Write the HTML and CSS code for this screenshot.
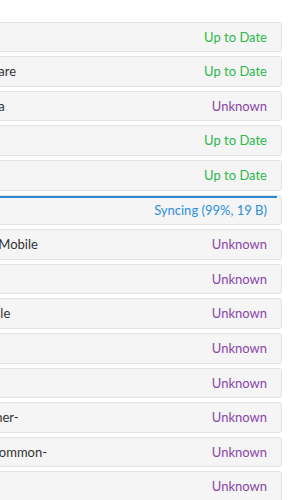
FILE: index.html
```html
<!DOCTYPE html>
<html lang="en">

<head>
    <meta charset="UTF-8">
    <meta name="viewport" content="width=device-width, initial-scale=1.0">
    <title>Folders</title>
    <link rel="stylesheet" href="styles.css">
</head>

<body>

    <div class="folders">
        <div class="folder">
            <span class="folder-name">Photos</span>
            <span class="status status-ok">Up to Date</span>
        </div>
        <div class="folder">
            <span class="folder-name">Gaming Software</span>
            <span class="status status-ok">Up to Date</span>
        </div>
        <div class="folder">
            <span class="folder-name">Mobile Camera</span>
            <span class="status status-unknown">Unknown</span>
        </div>
        <div class="folder">
            <span class="folder-name">Music</span>
            <span class="status status-ok">Up to Date</span>
        </div>
        <div class="folder">
            <span class="folder-name">Books</span>
            <span class="status status-ok">Up to Date</span>
        </div>
        <div class="folder folder-syncing">
            <div class="progress" style="width: 99%"></div>
            <span class="folder-name">Notes</span>
            <span class="status status-syncing">Syncing (99%, 19 B)</span>
        </div>
        <div class="folder">
            <span class="folder-name">Voice Memos Mobile</span>
            <span class="status status-unknown">Unknown</span>
        </div>
        <div class="folder">
            <span class="folder-name">Work</span>
            <span class="status status-unknown">Unknown</span>
        </div>
        <div class="folder">
            <span class="folder-name">Musique Mobile</span>
            <span class="status status-unknown">Unknown</span>
        </div>
        <div class="folder">
            <span class="folder-name">Backup</span>
            <span class="status status-unknown">Unknown</span>
        </div>
        <div class="folder">
            <span class="folder-name">Shared</span>
            <span class="status status-unknown">Unknown</span>
        </div>
        <div class="folder">
            <span class="folder-name">Widget-Weather-</span>
            <span class="status status-unknown">Unknown</span>
        </div>
        <div class="folder">
            <span class="folder-name">Android-Lib-Common-</span>
            <span class="status status-unknown">Unknown</span>
        </div>
        <div class="folder">
            <span class="folder-name">Sync</span>
            <span class="status status-unknown">Unknown</span>
        </div>
    </div>

</body>

</html>
```

FILE: styles.css
```css
body {
    font-family: Lato, 'Open Sans', sans-serif;
    font-size: 13px;
    margin: 0;
    padding: 0;
    background-color: #fff;
    color: #333;
    overflow: hidden;
}

.folders {
    margin: 21.7px 15px 0 -98px;
}

.folder {
    position: relative;
    display: flex;
    justify-content: space-between;
    align-items: center;
    padding: 4px 14px 4px 15px;
    margin-bottom: 4px;
    line-height: 20.6px;
    white-space: nowrap;
    background-color: #f5f5f5;
    border: 1px solid #e3e3e3;
    border-radius: 3px;
}

.progress {
    position: absolute;
    top: 0;
    left: 0;
    height: 2px;
    background-color: #2b8ad8;
}

.status-ok {
    color: #2cb84c;
}

.status-unknown {
    color: #8846a8;
}

.status-syncing {
    color: #2d8fdb;
}
```
